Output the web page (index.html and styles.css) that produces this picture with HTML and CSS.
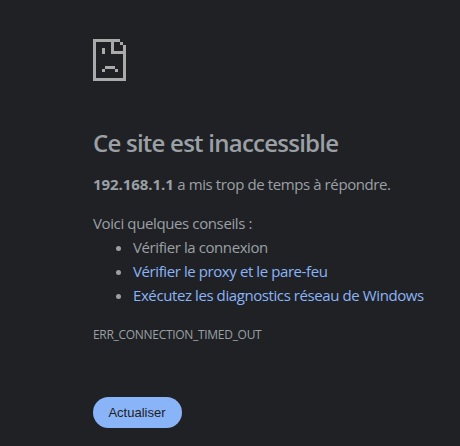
FILE: index.html
```html
<!DOCTYPE html>
<html lang="fr">
  <head>
    <meta charset="UTF-8" />
    <title>192.168.1.1</title>
    <link rel="stylesheet" href="styles.css">
  </head>

  <body>
    <main class="error-page">
      <svg class="icon" width="33" height="42" viewBox="0 0 33 42" shape-rendering="crispEdges">
        <path d="M0 0h27v3h3v3h3v36H0zM3 3v36h27V15H18V3zM21 3v9h9V6h-3V3z" fill-rule="evenodd" />
        <path d="M9 9h3v6H9zM12 27h10v3H12zM9 30h3v3H9zM22 30h3v3h-3z" />
      </svg>
      <h1>Ce site est inaccessible</h1>
      <p class="summary"><strong>192.168.1.1</strong> a mis trop de temps à répondre.</p>
      <p class="hint">Voici quelques conseils :</p>
      <ul class="suggestions">
        <li>Vérifier la connexion</li>
        <li><a href="#">Vérifier le proxy et le pare-feu</a></li>
        <li><a href="#">Exécutez les diagnostics réseau de Windows</a></li>
      </ul>
      <p class="error-code">ERR_CONNECTION_TIMED_OUT</p>
      <button class="reload">Actualiser</button>
    </main>
  </body>
</html>
```

FILE: styles.css
```css
body {
  margin: 0;
  background-color: #202124;
  color: #9aa0a6;
  font-family: "Segoe UI", "Open Sans", "Noto Sans", sans-serif;
  font-size: 15px;
  line-height: 24px;
  white-space: nowrap;
}

.error-page {
  padding: 39px 0 0 93px;
}

.icon {
  display: block;
  fill: #aaa;
}

h1 {
  margin: 47px 0 14px;
  font-size: 24px;
  font-weight: 600;
  line-height: 30px;
  letter-spacing: -0.76px;
}

p {
  margin: 0;
}

.summary {
  letter-spacing: -0.4px;
}

.summary strong {
  letter-spacing: -0.06px;
}

.hint {
  margin-top: 15px;
  letter-spacing: -0.38px;
}

.suggestions {
  margin: 0;
  padding-left: 40px;
  letter-spacing: -0.41px;
}

a {
  color: #8ab4f8;
  text-decoration: none;
}

.error-code {
  margin-top: 16px;
  font-size: 12px;
  letter-spacing: -0.3px;
}

.reload {
  display: block;
  width: 89px;
  height: 31px;
  margin-top: 50px;
  padding: 0 1px 0 0;
  border: none;
  border-radius: 16px;
  background-color: #8ab4f8;
  color: #202124;
  font-family: "Liberation Sans", Arial, sans-serif;
  font-size: 13px;
  cursor: pointer;
}
```
